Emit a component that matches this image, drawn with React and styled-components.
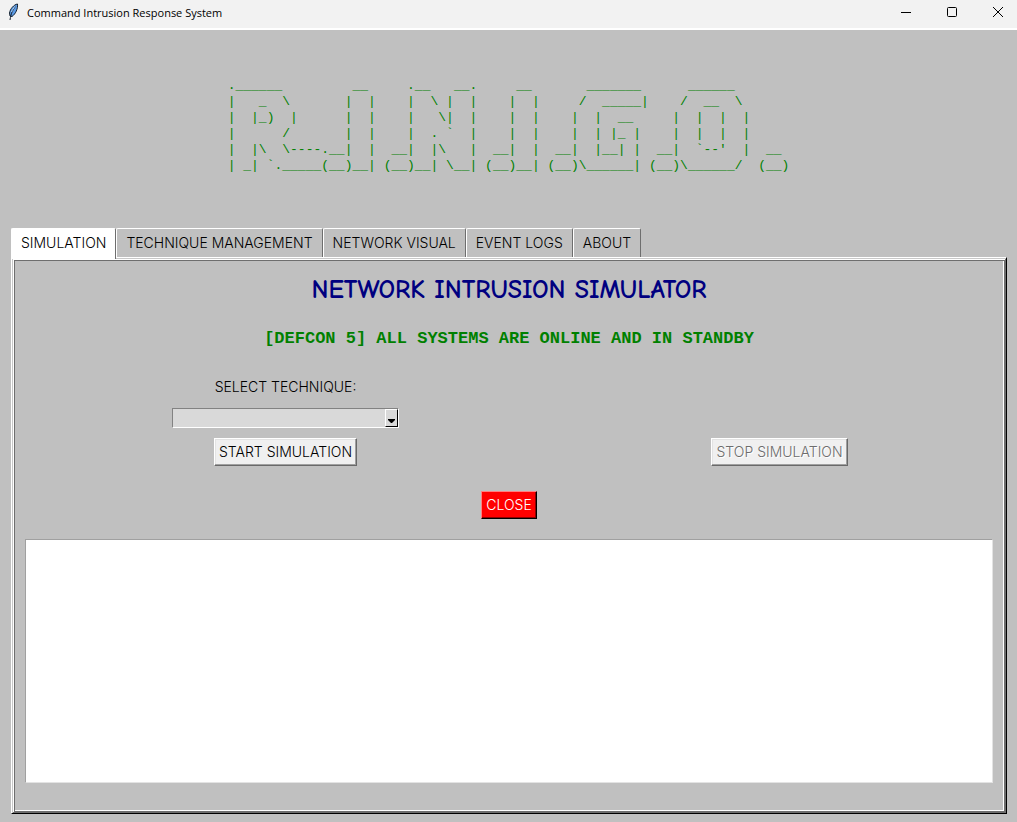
import React, { useState } from "react";
import styled, { createGlobalStyle, css } from "styled-components";

const GlobalStyle = createGlobalStyle`
  *, *::before, *::after { box-sizing: border-box; }
  body { margin: 0; background: #c0c0c0; }
  button, select, textarea { font: inherit; color: inherit; margin: 0; }
`;

const Window = styled.div`
  display: flex;
  flex-direction: column;
  min-height: 100vh;
  background: #c0c0c0;
  color: #000;
  font: 300 14px/18px Inter, "Liberation Sans", sans-serif;
`;

const TitleBar = styled.header`
  display: flex;
  align-items: center;
  height: 30px;
  padding: 0 0 4px 7px;
  background: #f2f2f2;
  border-bottom: 2px solid #fff;
`;

const Caption = styled.span`
  flex: 1;
  padding: 2px 0 0 8px;
  font: 400 11px/16px "Open Sans", "Noto Sans", sans-serif;
`;

const CaptionButtons = styled.div`
  display: flex;
  gap: 8px;
`;

const CaptionButton = styled.button`
  display: grid;
  place-items: center;
  width: 38px;
  height: 24px;
  padding: 0;
  border: 0;
  background: transparent;
`;

const Banner = styled.pre`
  display: flex;
  justify-content: center;
  margin: 0;
  padding: 48px 0 54px;
  color: #008000;
  font: 400 13px/16px "Liberation Mono", monospace;
`;

const Notebook = styled.main`
  flex: 1;
  display: flex;
  flex-direction: column;
  padding: 0 10px 8px 11px;
`;

const TabList = styled.div`
  display: flex;
  height: 29px;
`;

const Tab = styled.button`
  height: 29px;
  padding: 0 9px;
  border: 1px solid;
  border-color: #fff #6e6e6e transparent #fff;
  border-bottom: 0;
  border-radius: 2px 2px 0 0;
  background: #c0c0c0;
  white-space: nowrap;
  ${(p) =>
    p.$selected &&
    css`
      z-index: 1;
      height: 31px;
      padding-bottom: 3px;
      background: #fff;
    `}
`;

const Panel = styled.section`
  flex: 1;
  display: flex;
  flex-direction: column;
  align-items: stretch;
  padding: 16px 3px 30px;
  border: 1px solid;
  border-color: #fff #000 #000 #fff;
  box-shadow:
    inset 1px 1px #c8c8c8,
    inset -1px -1px #6e6e6e,
    inset 2px 2px #fff,
    inset -2px -2px #6e6e6e,
    inset 3px 3px #6e6e6e,
    inset -3px -3px #fff;
`;

const Heading = styled.h1`
  margin: 0;
  color: #000080;
  text-align: center;
  font: 700 26px/32px "Comic Sans MS", "Comic Neue", "Noto Sans", sans-serif;
`;

const Status = styled.p`
  margin: 0;
  padding-top: 23px;
  color: #008000;
  text-align: center;
  white-space: nowrap;
  font: 700 17px/20px "Liberation Mono", monospace;
`;

const Controls = styled.div`
  display: grid;
  grid-template-columns: 23fr 19fr;
  justify-items: center;
  row-gap: 10px;
  padding-top: 29px;
`;

const FieldLabel = styled.label`
  grid-column: 1;
  padding-bottom: 2px;
`;

const Combo = styled.div`
  grid-column: 1;
  position: relative;
  width: 227px;
  height: 20px;
`;

const ComboSelect = styled.select`
  display: block;
  appearance: none;
  width: 100%;
  height: 100%;
  padding: 0 16px 0 2px;
  border: 1px solid;
  border-color: #828282 #fff #fff #828282;
  border-radius: 0;
  background: #d9d9d9;
`;

const ComboArrow = styled.span`
  position: absolute;
  top: 1px;
  right: 1px;
  display: flex;
  align-items: flex-end;
  justify-content: center;
  width: 13px;
  height: 18px;
  padding-bottom: 3px;
  border: 1px solid;
  border-color: #fff #000 #000 #fff;
  background: #d9d9d9;
  pointer-events: none;
`;

const PushButton = styled.button`
  grid-column: ${(p) => p.$column};
  height: 28px;
  padding: 0 4px;
  border: 1px solid;
  border-color: #fff #696969 #696969 #fff;
  border-radius: 0;
  background: #f0f0f0;
  box-shadow: inset -1px -1px #a0a0a0, inset 1px 1px #e3e3e3;
  white-space: nowrap;
  &:disabled {
    color: #6d6d6d;
    text-shadow: 1px 1px #fff;
  }
`;

const CloseButton = styled(PushButton)`
  align-self: center;
  margin-top: 25px;
  border-color: #ff8080 #000 #000 #ff8080;
  background: #f00;
  box-shadow: inset -1px -1px #900000;
  color: #fff;
`;

const Log = styled.textarea`
  flex: 1;
  min-height: 120px;
  margin: 20px 10px 0;
  padding: 4px;
  border: 1px solid;
  border-color: #a0a0a0 #e3e3e3 #e3e3e3 #a0a0a0;
  border-radius: 0;
  background: #fff;
  resize: none;
  outline: 0;
`;

const BANNER = [
  ".______         __     .__   __.     __       _______      ______",
  "|   _  \\       |  |    |  \\ |  |    |  |     /  _____|    /  __  \\",
  "|  |_)  |      |  |    |   \\|  |    |  |    |  |  __     |  |  |  |",
  "|      /       |  |    |  . `  |    |  |    |  | |_ |    |  |  |  |",
  "|  |\\  \\----.__|  |  __|  |\\   |  __|  |  __|  |__| |  __|  `--'  |  __",
  "| _| `._____(__)__| (__)__| \\__| (__)__| (__)\\______| (__)\\______/  (__)",
].join("\n");

const TABS = ["SIMULATION", "TECHNIQUE MANAGEMENT", "NETWORK VISUAL", "EVENT LOGS", "ABOUT"];

const Feather = () => (
  <svg width="12" height="18" viewBox="0 0 12 18" aria-hidden="true">
    <path d="M10.5 1C7 1.5 3 6 2.5 10l.5 3 2 .5C8.500 11 11 6 10.500 1Z" fill="#5b9be6" stroke="#14202e" />
    <path d="M9 3C6 6 4 10 3 17" fill="none" stroke="#14202e" />
    <path d="M8.500 3C6.500 5 5 7.500 4.500 9" fill="none" stroke="#a9d0fa" />
  </svg>
);

export default function App() {
  const [tab, setTab] = useState(TABS[0]);
  return (
    <Window>
      <GlobalStyle />
      <TitleBar>
        <Feather />
        <Caption>Command Intrusion Response System</Caption>
        <CaptionButtons>
          <CaptionButton aria-label="Minimize">
            <svg width="12" height="12" fill="none" stroke="#000"><path d="M1 6.500h10" /></svg>
          </CaptionButton>
          <CaptionButton aria-label="Maximize">
            <svg width="12" height="12" fill="none" stroke="#000"><rect x="1.500" y="1.500" width="9" height="9" rx="1" /></svg>
          </CaptionButton>
          <CaptionButton aria-label="Close window">
            <svg width="12" height="12" fill="none" stroke="#000"><path d="M1 1l10 10M11 1L1 11" /></svg>
          </CaptionButton>
        </CaptionButtons>
      </TitleBar>
      <Banner>{BANNER}</Banner>
      <Notebook>
        <TabList role="tablist">
          {TABS.map((name) => (
            <Tab key={name} role="tab" aria-selected={name === tab} $selected={name === tab} onClick={() => setTab(name)}>
              {name}
            </Tab>
          ))}
        </TabList>
        <Panel role="tabpanel" aria-label={tab}>
          <Heading>NETWORK INTRUSION SIMULATOR</Heading>
          <Status>[DEFCON 5] ALL SYSTEMS ARE ONLINE AND IN STANDBY</Status>
          <Controls>
            <FieldLabel htmlFor="technique">SELECT TECHNIQUE:</FieldLabel>
            <Combo>
              <ComboSelect id="technique" defaultValue="">
                <option value="" />
              </ComboSelect>
              <ComboArrow>
                <svg width="7" height="4" aria-hidden="true"><path d="M0 0h7v1L4 4H3L0 1Z" /></svg>
              </ComboArrow>
            </Combo>
            <PushButton $column={1}>START SIMULATION</PushButton>
            <PushButton $column={2} disabled>STOP SIMULATION</PushButton>
          </Controls>
          <CloseButton>CLOSE</CloseButton>
          <Log aria-label="Simulation output" />
        </Panel>
      </Notebook>
    </Window>
  );
}
